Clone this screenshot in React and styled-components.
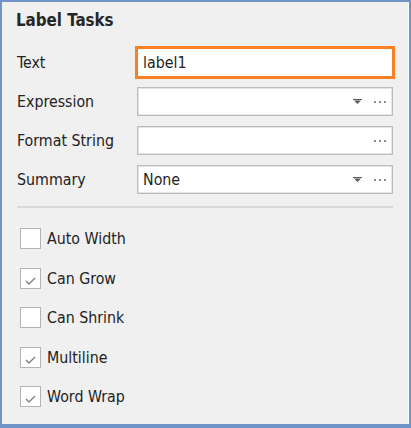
import styled, { createGlobalStyle } from "styled-components";

const Global = createGlobalStyle`
  html, body {
    margin: 0;
    padding: 0;
    background: #f0f0f0;
  }
  body {
    font-family: "DejaVu Sans Condensed", "DejaVu Sans", sans-serif;
    color: #222;
  }
`;

const fields = [
  { label: "Text", value: "label1", focused: true },
  { label: "Expression", value: "", dropdown: true },
  { label: "Format String", value: "" },
  { label: "Summary", value: "None", dropdown: true },
];

const options = [
  { label: "Auto Width", checked: false },
  { label: "Can Grow", checked: true },
  { label: "Can Shrink", checked: false },
  { label: "Multiline", checked: true },
  { label: "Word Wrap", checked: true },
];

function DropArrow() {
  return (
    <svg width="9" height="5" viewBox="0 0 9 5">
      <rect x="0" y="0" width="9" height="1" fill="#5b5b5b" />
      <polygon points="1,1.5 8,1.5 4.5,5" fill="#5b5b5b" />
    </svg>
  );
}

function Ellipsis() {
  return (
    <svg width="12" height="2" viewBox="0 0 12 2">
      <rect x="0" y="0" width="2" height="2" fill="#8c8c8c" />
      <rect x="5" y="0" width="2" height="2" fill="#8c8c8c" />
      <rect x="10" y="0" width="2" height="2" fill="#8c8c8c" />
    </svg>
  );
}

function Check() {
  return (
    <svg width="11" height="8" viewBox="0 0 11 8">
      <polyline
        points="1,4 4,7 10,1"
        fill="none"
        stroke="#7d7d7d"
        strokeWidth="1.3"
      />
    </svg>
  );
}

const App = () => {
  return (
    <>
      <Global />
      <Panel>
        <Title>Label Tasks</Title>
        {fields.map((f, i) => (
          <FieldRow key={i}>
            <FieldLabel>{f.label}</FieldLabel>
            <Input $focused={f.focused}>
              <Value>{f.value}</Value>
              {!f.focused && (
                <Buttons>
                  {f.dropdown && <DropArrow />}
                  <Ellipsis />
                </Buttons>
              )}
            </Input>
          </FieldRow>
        ))}
        <Separator />
        <CheckList>
          {options.map((o, i) => (
            <CheckRow key={i}>
              <Box>{o.checked && <Check />}</Box>
              <span>{o.label}</span>
            </CheckRow>
          ))}
        </CheckList>
      </Panel>
    </>
  );
};

const Panel = styled.div`
  box-sizing: border-box;
  height: 428px;
  width: 411px;
  border: 2px solid #7094c6;
  border-bottom-width: 4px;
  box-shadow: inset -1px 0 0 #fbfbfb;
  background: #f0f0f0;
  padding: 8px 16px 0 15px;
`;

const Title = styled.div`
  font-weight: bold;
  font-size: 16.8px;
  line-height: 20px;
  color: #262626;
  margin: 0 0 13px -1px;
`;

const FieldRow = styled.div`
  display: grid;
  grid-template-columns: 120px 256px;
  align-items: center;
  height: 39px;
  font-size: 15.8px;
`;

const FieldLabel = styled.span`
  color: #222;
`;

const Input = styled.div`
  box-sizing: border-box;
  height: 29px;
  display: flex;
  align-items: center;
  background: #fff;
  padding: 0 6px 0 5px;
  border: 1px solid ${(p) => (p.$focused ? "#fd7f24" : "#bcbcbc")};
  box-shadow: ${(p) =>
    p.$focused ? "0 0 0 2px #fd7f24" : "inset 0 0 0 1px #e4e4e4"};
`;

const Value = styled.span`
  flex: 1;
  color: #1e1e1e;
`;

const Buttons = styled.div`
  display: flex;
  align-items: center;
  gap: 12px;
  svg {
    display: block;
  }
`;

const Separator = styled.div`
  height: 2px;
  background: #d9d9d9;
  margin: 7px 0 11px 0;
`;

const CheckList = styled.div`
  display: flex;
  flex-direction: column;
  padding-left: 3px;
`;

const CheckRow = styled.div`
  display: flex;
  align-items: center;
  gap: 6px;
  height: 39.5px;
  flex-shrink: 0;
  font-size: 15.8px;
  color: #222;
`;

const Box = styled.div`
  box-sizing: border-box;
  width: 21px;
  height: 21px;
  background: #fff;
  border: 1px solid #b3b3b3;
  display: flex;
  align-items: flex-end;
  justify-content: center;
  padding-bottom: 3px;
  svg {
    display: block;
  }
`;

export default App;
